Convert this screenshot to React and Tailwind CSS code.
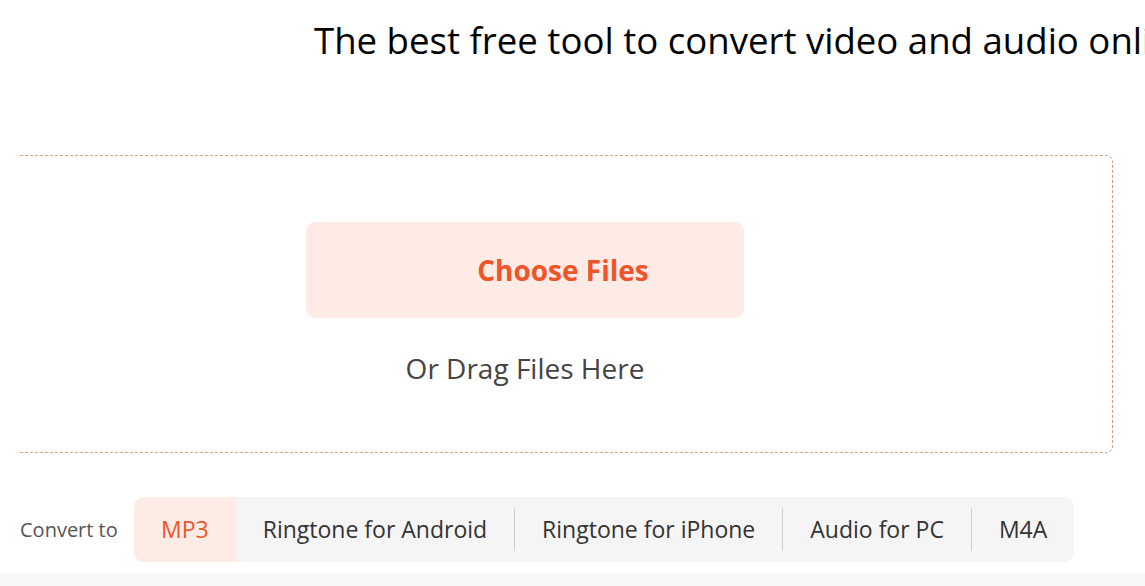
import React, { useState } from 'react';

const formats = ['MP3', 'Ringtone for Android', 'Ringtone for iPhone', 'Audio for PC', 'M4A'];

export default function App() {
  const [active, setActive] = useState('MP3');

  return (
    <div className="w-[1145px] h-[586px] overflow-hidden bg-white flex flex-col" style={{ fontFamily: '"Open Sans", "Noto Sans", sans-serif' }}>
      {/* Title */}
      <h1 className="pl-[314px] pt-[16px] h-[56px] whitespace-nowrap text-[36.6px] leading-[48px] text-black font-normal">
        The best free tool to convert video and audio online
      </h1>

      {/* Drop zone */}
      <div className="ml-[20px] mt-[99px] w-[1093px] h-[298px] border-t border-r border-b border-dashed border-[#e49a77] rounded-r-[7px] flex flex-col">
        <button className="ml-[286px] mt-[66px] w-[438px] h-[96px] rounded-[9px] bg-[#feebe5] flex items-center justify-center pl-[76px]">
          <span className="text-[28px] font-bold text-[#f0542a]">Choose Files</span>
        </button>
        <p className="ml-[286px] w-[438px] mt-[29px] text-center text-[28px] text-[#444]">Or Drag Files Here</p>
      </div>

      {/* Convert to */}
      <div className="flex items-center mt-[44px] pl-[20px]">
        <span className="text-[20px] text-[#555] w-[114px]">Convert to</span>
        <div className="flex items-center h-[65px] bg-[#f5f5f5] rounded-[10px] overflow-hidden">
          {formats.map((f, i) => (
            <React.Fragment key={f}>
              {i > 1 && <div className="w-px h-[43px] bg-[#cfcfcf]" />}
              <button
                onClick={() => setActive(f)}
                className={`h-full px-[27px] text-[23px] ${active === f ? 'bg-[#fdece6] text-[#f0542a]' : 'text-[#333]'}`}
              >
                {f}
              </button>
            </React.Fragment>
          ))}
        </div>
      </div>

      <div className="mt-[12px] flex-1 bg-[#f8f8f8]" />
    </div>
  );
}
